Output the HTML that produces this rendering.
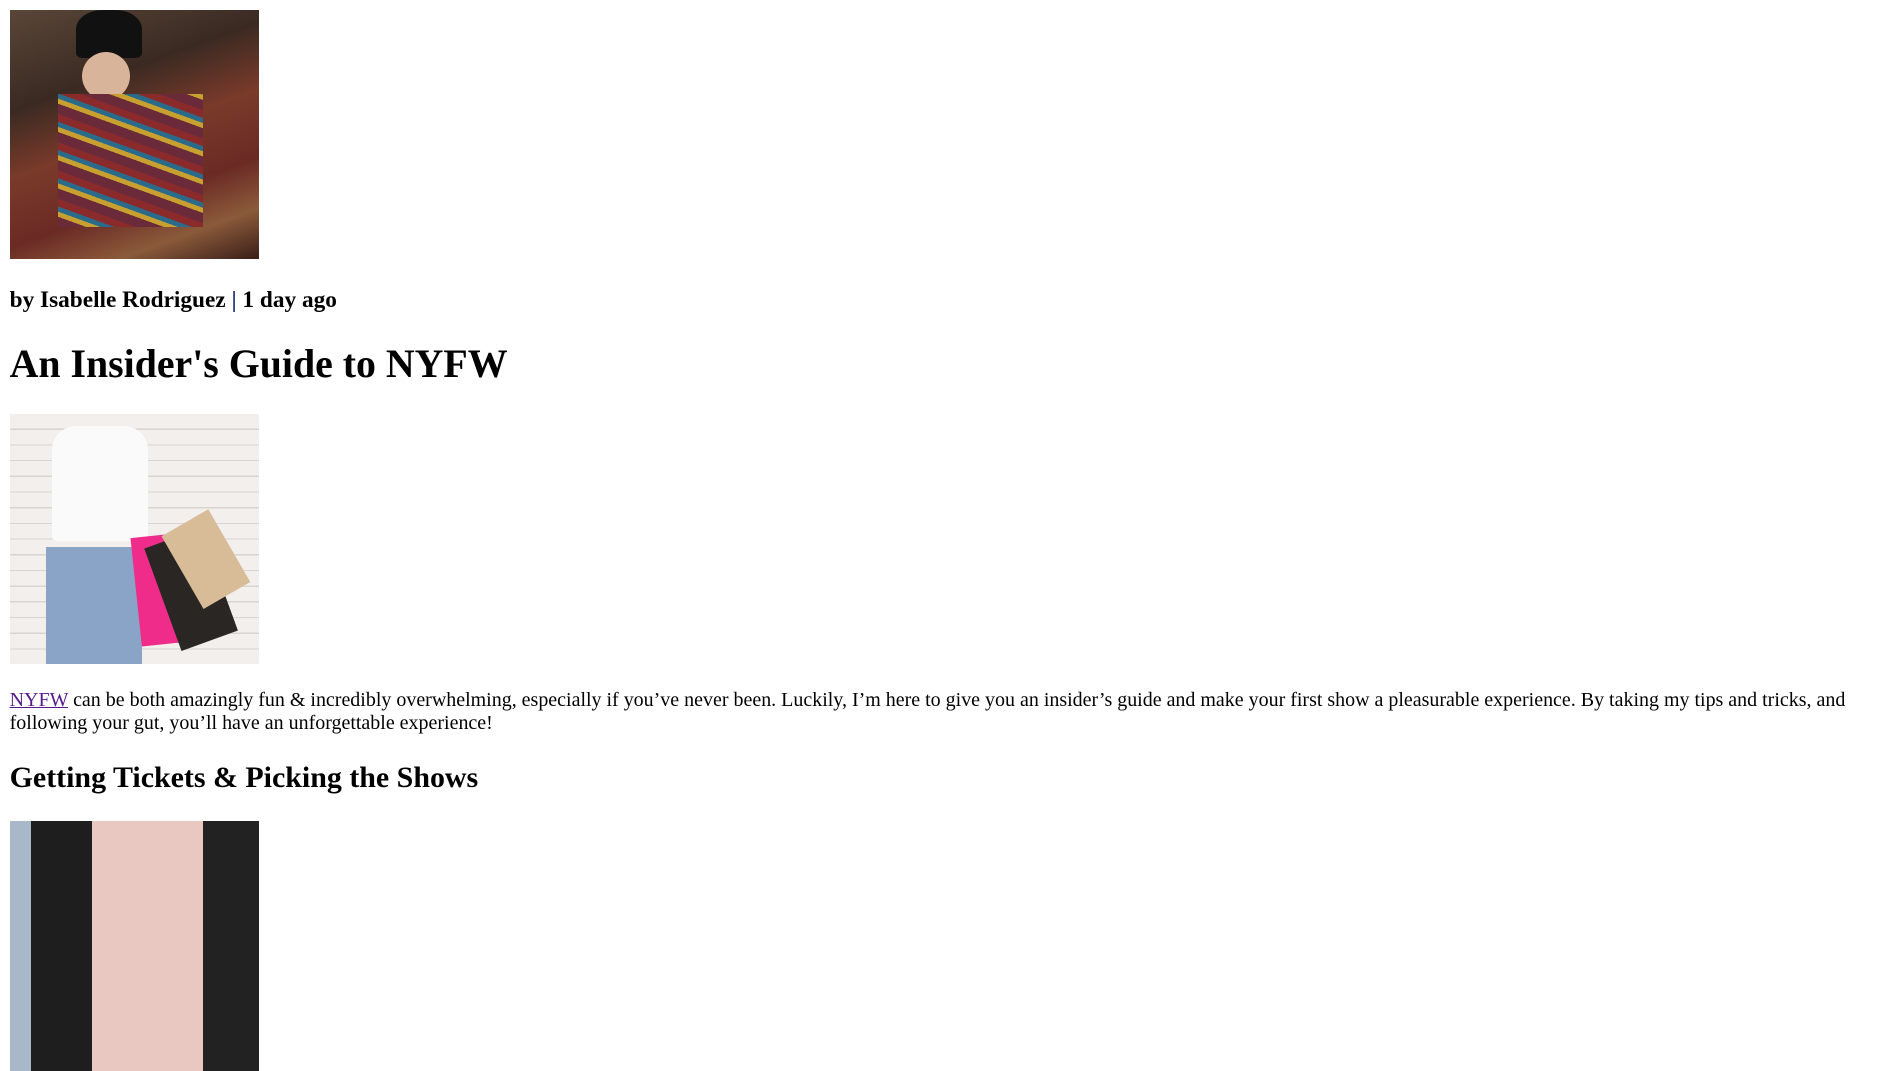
<!DOCTYPE html>
<html><head><meta charset="utf-8">
<style>
html{zoom:1.207}
body{margin:0;font-family:"Liberation Serif",serif;color:#000;background:#fff;position:relative;width:1568px;height:786px;overflow:hidden}
.a{position:absolute;left:8px}
.img{width:207px;height:207px;overflow:hidden}
h4,h1,h2,p{margin:0;font-weight:bold}
p{font-weight:normal;font-size:16.55px;line-height:19px;width:1545px}
a{color:#551a8b}
</style></head><body>
<div class="a img" style="top:8px;background:linear-gradient(160deg,#5a4638 0%,#3a2a22 30%,#7a3a2a 50%,#6b2a24 70%,#8a5a3a 85%,#3a1e18 100%)">
 <div style="position:absolute;left:55px;top:0;width:55px;height:40px;background:#111;border-radius:40% 40% 10% 10%"></div>
 <div style="position:absolute;left:60px;top:35px;width:40px;height:40px;background:#d8b49a;border-radius:50%"></div>
 <div style="position:absolute;left:40px;top:70px;width:120px;height:110px;background:repeating-linear-gradient(20deg,#6a2a3a 0 8px,#c8a030 8px 12px,#2a6a8a 12px 16px,#8a2a2a 16px 22px)"></div>
</div>
<h4 class="a" style="top:238px;font-size:19.3px;line-height:22px">by Isabelle Rodriguez <span style="color:#1a2a6a">|</span> 1 day ago</h4>
<h1 class="a" style="top:282px;font-size:33px;line-height:40px">An Insider's Guide to NYFW</h1>
<div class="a img" style="top:343px;background:repeating-linear-gradient(0deg,#f2efec 0 12px,#d8d4d0 12px 13px)">
 <div style="position:absolute;left:35px;top:10px;width:80px;height:95px;background:#fafafa;border-radius:20px 20px 4px 4px"></div>
 <div style="position:absolute;left:30px;top:110px;width:80px;height:97px;background:#8aa4c8"></div>
 <div style="position:absolute;left:105px;top:100px;width:45px;height:90px;background:#f02c8a;transform:rotate(-6deg)"></div>
 <div style="position:absolute;left:125px;top:100px;width:50px;height:90px;background:#2a2624;transform:rotate(-20deg)"></div>
 <div style="position:absolute;left:140px;top:85px;width:45px;height:70px;background:#d8bc98;transform:rotate(-30deg)"></div>
</div>
<p class="a" style="top:571px"><a href="#">NYFW</a> can be both amazingly fun &amp; incredibly overwhelming, especially if you’ve never been. Luckily, I’m here to give you an insider’s guide and make your first show a pleasurable experience. By taking my tips and tricks, and following your gut, you’ll have an unforgettable experience!</p>
<h2 class="a" style="top:630px;font-size:24.8px;line-height:30px">Getting Tickets &amp; Picking the Shows</h2>
<div class="a img" style="top:680px;background:#e8e4e0">
 <div style="position:absolute;left:0;top:0;width:20px;height:207px;background:#a8b8c8"></div>
 <div style="position:absolute;left:18px;top:0;width:50px;height:207px;background:#1e1e1e"></div>
 <div style="position:absolute;left:160px;top:0;width:47px;height:207px;background:#222"></div>
 <div style="position:absolute;left:68px;top:0;width:92px;height:207px;background:#e8c8c0"></div>
</div>
</body></html>
